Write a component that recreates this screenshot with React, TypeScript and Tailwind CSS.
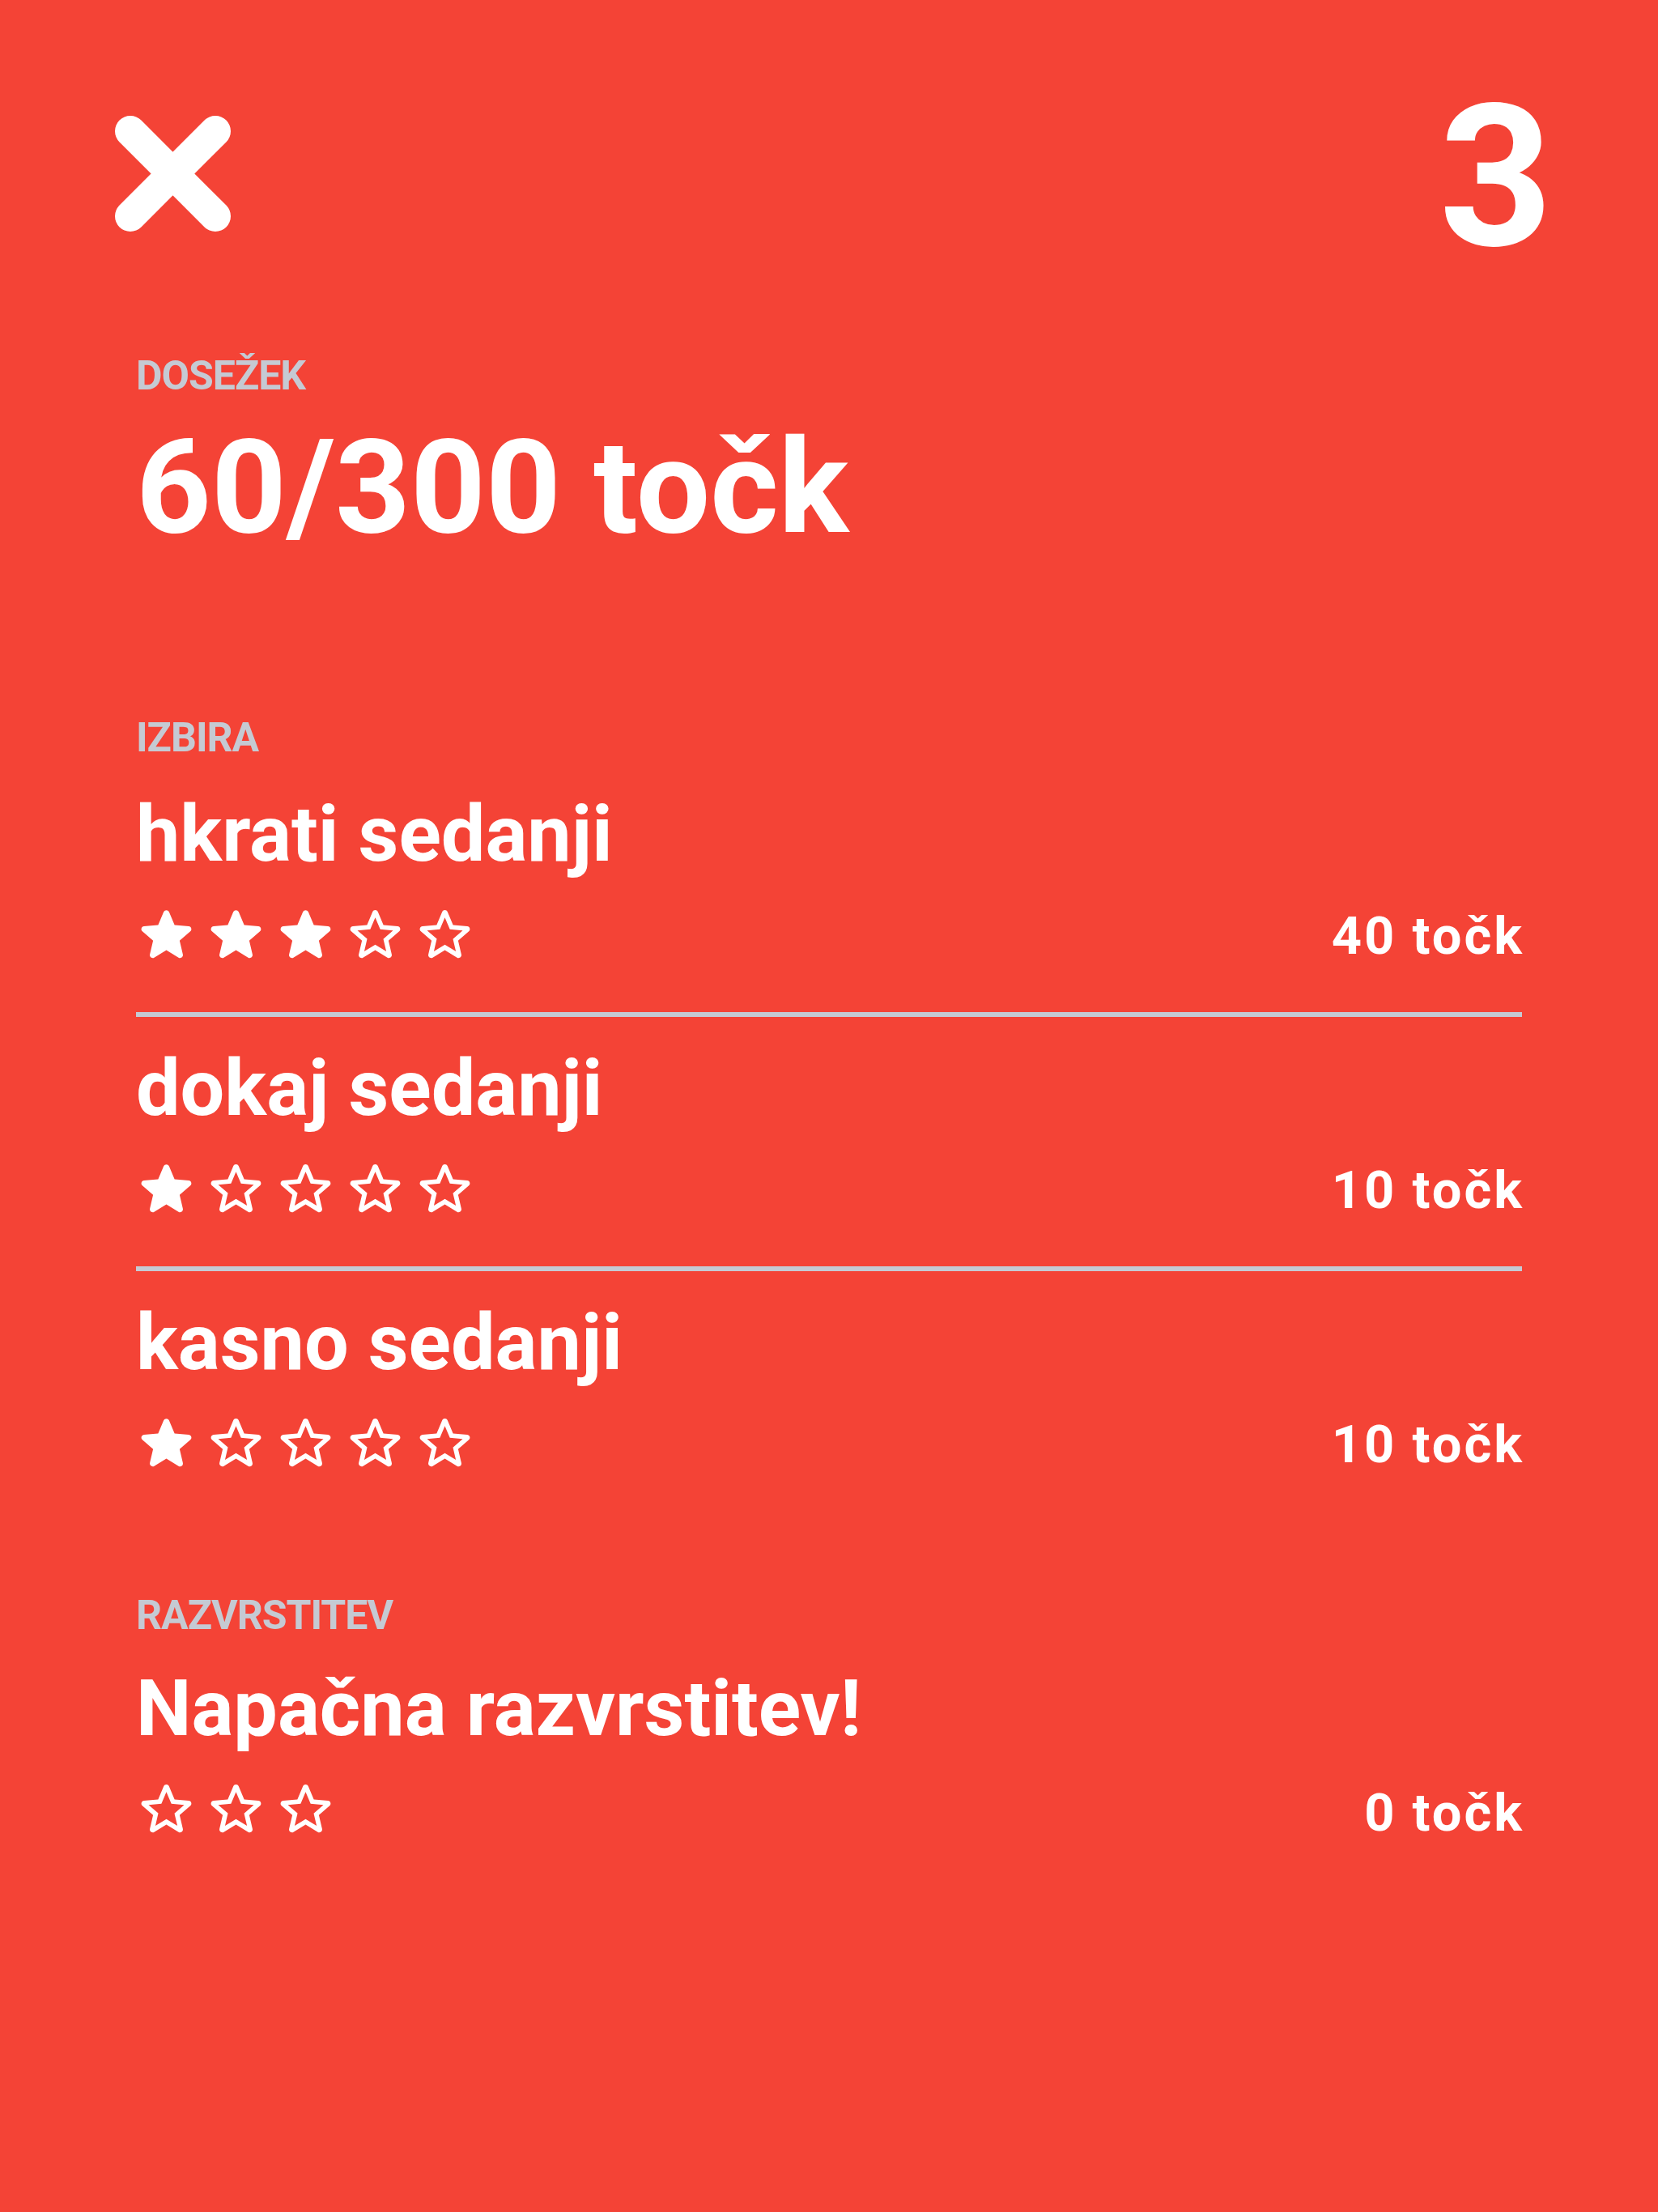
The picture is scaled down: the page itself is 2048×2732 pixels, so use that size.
import React from "react";

const FONT = { fontFamily: "Roboto, 'Noto Sans', sans-serif" };

type Choice = { label: string; score: number; max: number; points: number };

const choices: Choice[] = [
  { label: "hkrati sedanji", score: 3, max: 5, points: 40 },
  { label: "dokaj sedanji", score: 1, max: 5, points: 10 },
  { label: "kasno sedanji", score: 1, max: 5, points: 10 },
];

function Star({ filled }: { filled: boolean }) {
  return (
    <svg viewBox="3 3 18 17.4" width={65} height={63} fill="white" className="shrink-0">
      {filled ? (
        <path d="M12 17.27l4.15 2.51c.76.46 1.69-.22 1.49-1.08l-1.1-4.72 3.67-3.18c.67-.58.31-1.68-.57-1.75l-4.83-.41-1.890-4.46c-.34-.81-1.5-.81-1.84 0L9.19 8.63l-4.83.41c-.88.07-1.24 1.170-.57 1.75l3.67 3.18-1.1 4.72c-.2.86.73 1.54 1.49 1.08l4.15-2.5z" />
      ) : (
        <path d="M19.65 9.04l-4.84-.42-1.89-4.45c-.34-.81-1.5-.81-1.84 0L9.19 8.63l-4.83.41c-.88.07-1.24 1.17-.57 1.75l3.67 3.18-1.1 4.72c-.2.86.73 1.54 1.49 1.08l4.15-2.5 4.15 2.51c.76.46 1.69-.22 1.49-1.08l-1.1-4.73 3.67-3.18c.67-.58.32-1.68-.56-1.75zM12 15.4l-3.76 2.27 1-4.28-3.32-2.88 4.38-.38L12 6.1l1.71 4.04 4.38.38-3.32 2.88 1 4.28L12 15.4z" />
      )}
    </svg>
  );
}

function StarRow({ score, max, points, textOffset = "mt-[6px]" }: { score: number; max: number; points: number; textOffset?: string }) {
  return (
    <div className="flex items-center justify-between h-[66px]">
      <div className="flex items-center gap-[21px] ml-[5px]">
        {Array.from({ length: max }).map((_, i) => (
          <Star key={i} filled={i < score} />
        ))}
      </div>
      <span className={`text-[65px] leading-none font-bold text-white tracking-[3px] mr-[-3px] ${textOffset}`}>
        {points} točk
      </span>
    </div>
  );
}

function Label({ children }: { children: React.ReactNode }) {
  return <p className="text-[50px] leading-none font-bold text-[#c5cad3] tracking-[-1px]">{children}</p>;
}

function Title({ children }: { children: React.ReactNode }) {
  return <h2 className="text-[97px] leading-none font-bold text-white">{children}</h2>;
}

export default function App() {
  return (
    <div className="min-h-screen w-full bg-[#f44336]" style={FONT}>
      {/* header */}
      <div className="flex items-start justify-between pl-[142px] pr-[130px] pt-[97px]">
        <svg viewBox="0 0 143 143" width={143} height={143} className="mt-[46px]">
          <path d="M19 19L124 124M124 19L19 124" stroke="white" strokeWidth={38} strokeLinecap="round" />
        </svg>
        <span className="text-[245px] leading-none font-bold text-white">3</span>
      </div>

      <div className="px-[168px]">
        <div className="mt-[97px]">
          <Label>DOSEŽEK</Label>
          <p className="mt-[32px] text-[162px] leading-none font-bold text-white">60/300 točk</p>
        </div>

        <div className="mt-[203px]">
          <Label>IZBIRA</Label>
          <div className="mt-[46px]">
            {choices.map((c, i) => (
              <div key={c.label}>
                <Title>{c.label}</Title>
                <div className="mt-[41px]">
                  <StarRow score={c.score} max={c.max} points={c.points} />
                </div>
                {i < choices.length - 1 && <div className="mt-[64px] mb-[40px] h-[6px] bg-[#c5cad3]" />}
              </div>
            ))}
          </div>
        </div>

        <div className="mt-[156px]">
          <Label>RAZVRSTITEV</Label>
          <div className="mt-[42px]">
            <Title>Napačna razvrstitev!</Title>
            <div className="mt-[41px]">
              <StarRow score={0} max={3} points={0} textOffset="mt-[12px]" />
            </div>
          </div>
        </div>
      </div>
    </div>
  );
}
